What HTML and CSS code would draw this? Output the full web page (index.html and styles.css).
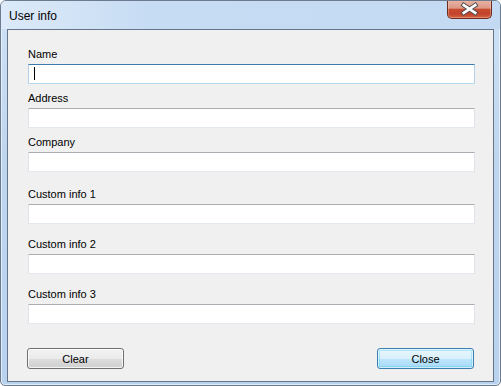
FILE: index.html
```html
<!DOCTYPE html>
<html lang="en">
<head>
    <meta charset="UTF-8">
    <meta name="viewport" content="width=device-width, initial-scale=1.0">
    <title>User info</title>
    <link rel="stylesheet" href="styles.css">
</head>
<body>
    <div class="window">
        <div class="titlebar">
            <span class="title">User info</span>
            <button class="close-x" aria-label="Close">
                <svg width="45" height="18" viewBox="0 0 45 18">
                    <path d="M16.5 5 L28.5 13 M28.5 5 L16.5 13" stroke="#4b4b4b" stroke-width="4.8" stroke-linecap="square" fill="none"/>
                    <path d="M16.5 5 L28.5 13 M28.5 5 L16.5 13" stroke="#ffffff" stroke-width="2.8" stroke-linecap="square" fill="none"/>
                </svg>
            </button>
        </div>

        <div class="client">
            <div class="form">
                <div class="field">
                    <label>Name</label>
                    <div class="input-wrap">
                        <input type="text" class="focused">
                        <span class="caret"></span>
                    </div>
                </div>
                <div class="field">
                    <label>Address</label>
                    <input type="text">
                </div>
                <div class="field">
                    <label>Company</label>
                    <input type="text">
                </div>
                <!-- custom fields sit a little further apart -->
                <div class="field group-start">
                    <label>Custom info 1</label>
                    <input type="text">
                </div>
                <div class="field loose">
                    <label>Custom info 2</label>
                    <input type="text">
                </div>
                <div class="field loose">
                    <label>Custom info 3</label>
                    <input type="text">
                </div>
            </div>

            <div class="actions">
                <button class="btn">Clear</button>
                <button class="btn default">Close</button>
            </div>
        </div>
    </div>
</body>
</html>
```

FILE: styles.css
```css
body {
    margin: 0;
    padding: 0;
    background-color: #ffffff;
    font-family: "Liberation Sans", Arial, sans-serif;
}
.window {
    width: 501px;
    height: 386px;
    box-sizing: border-box;
    border: 1px solid #6c7c8e;
    border-radius: 6px 6px 5px 5px;
    background: linear-gradient(to bottom, #cfe2f6, #bfd6ef 40%, #b9d2ee);
    box-shadow: inset 0 0 0 1px rgba(255, 255, 255, 0.55);
    display: flex;
    flex-direction: column;
    overflow: hidden;
}
.titlebar {
    height: 28px;
    display: flex;
    align-items: center;
    background: linear-gradient(to right, #dceaf9, #c6dcf3 30%, #c3daf2);
}
.title {
    padding-left: 8px;
    font-size: 12px;
    color: #000000;
    margin-top: 2px;
}
.close-x {
    margin-left: auto;
    margin-right: 8px;
    align-self: flex-start;
    margin-top: -1px;
    width: 45px;
    height: 19px;
    padding: 0;
    border: 1px solid #6a2c20;
    border-top: none;
    border-radius: 0 0 5px 5px;
    background: linear-gradient(to bottom, #eab4a6, #dd9886 45%, #c84a2f 52%, #c2432a 78%, #d66441);
    box-shadow: inset 0 0 0 1px rgba(255, 220, 210, 0.35);
    display: flex;
    align-items: center;
    justify-content: center;
}
.client {
    margin: 0 6px 3px 6px;
    height: 353px;
    box-sizing: border-box;
    border: 1px solid #64758a;
    background-color: #f0f0f0;
    padding: 17px 18px 0 20px;
    display: flex;
    flex-direction: column;
}
.form {
    display: flex;
    flex-direction: column;
    gap: 7px;
}
.field {
    display: flex;
    flex-direction: column;
}
.field.group-start {
    margin-top: 8px;
}
.field.loose {
    margin-top: 6px;
}
.field label {
    font-size: 11px;
    line-height: 15px;
    height: 15px;
    margin-bottom: 2px;
    color: #000000;
}
.field input {
    display: block;
    width: 100%;
    height: 20px;
    box-sizing: border-box;
    margin: 0;
    padding: 0 4px;
    background-color: #ffffff;
    border: 1px solid #e2e3ea;
    border-top-color: #abadb3;
    border-bottom-color: #e3e9ef;
    outline: none;
    font-family: inherit;
    font-size: 11px;
}
.field input.focused {
    border-color: #b5cfe7;
    border-top-color: #3d7bad;
    border-bottom-color: #b7d9ed;
}
.input-wrap {
    position: relative;
}
.caret {
    position: absolute;
    left: 6px;
    top: 3px;
    width: 1px;
    height: 13px;
    background-color: #000000;
}
.actions {
    display: flex;
    justify-content: space-between;
    margin: 24px 1px 0 -1px;
}
.btn {
    width: 97px;
    height: 21px;
    padding: 0;
    border: 1px solid #707070;
    border-radius: 3px;
    background: linear-gradient(to bottom, #f2f2f2, #ebebeb 50%, #dddddd 50%, #cfcfcf);
    box-shadow: inset 0 0 0 1px rgba(255, 255, 255, 0.75);
    font-family: inherit;
    font-size: 11px;
    color: #000000;
}
.btn.default {
    border-color: #3c7fb1;
    background: linear-gradient(to bottom, #eaf6fd, #d9f0fc 50%, #bee6fd 50%, #a7d9f5);
    box-shadow: inset 0 0 0 1px rgba(255, 255, 255, 0.6), inset 0 0 0 2px rgba(72, 200, 245, 0.35);
}
```
